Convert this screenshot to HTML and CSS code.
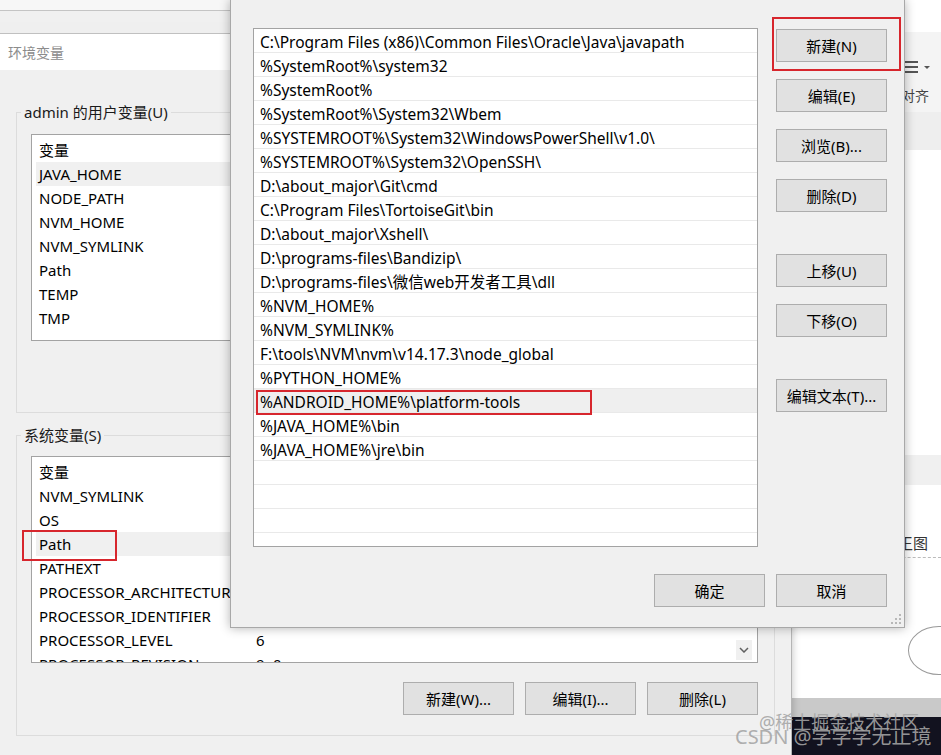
FILE: index.html
```html
<!DOCTYPE html>
<html lang="zh-CN">
<head>
    <meta charset="UTF-8">
    <meta name="viewport" content="width=device-width, initial-scale=1.0">
    <title>编辑环境变量</title>
    <link rel="stylesheet" href="styles.css">
</head>
<body>
<div class="desk">

    <!-- the editor window behind everything, only its right edge shows -->
    <div class="app-bg">
        <div class="app-top"></div>
        <div class="app-toolbar">
            <div class="tool">
                <svg class="tool-icon" width="30" height="16" viewBox="0 0 30 16">
                    <rect x="0" y="2" width="15" height="2" fill="#555"/>
                    <rect x="0" y="7" width="15" height="2" fill="#555"/>
                    <rect x="0" y="12" width="15" height="2" fill="#555"/>
                    <path d="M21 7 L27 7 L24 10 Z" fill="#555"/>
                </svg>
                <span class="tool-label">对齐</span>
            </div>
        </div>
        <div class="app-strip"></div>
        <div class="app-page"></div>
        <div class="app-strip app-strip-2"></div>
        <div class="app-page app-page-2">
            <span class="app-text">王图</span>
            <div class="dash-line"></div>
            <div class="round-btn"></div>
        </div>
        <div class="app-bar"></div>
        <div class="app-dark"></div>
    </div>

    <!-- 环境变量 -->
    <div class="win env-win">
        <div class="other-win"></div>
        <div class="win-title">环境变量</div>
        <div class="win-body">
            <div class="group">
                <div class="group-title">admin 的用户变量(U)</div>
                <div class="listbox">
                    <div class="lb-row lb-head"><span class="col-name">变量</span></div>
                    <div class="lb-row is-sel"><span class="col-name">JAVA_HOME</span></div>
                    <div class="lb-row"><span class="col-name">NODE_PATH</span></div>
                    <div class="lb-row"><span class="col-name">NVM_HOME</span></div>
                    <div class="lb-row"><span class="col-name">NVM_SYMLINK</span></div>
                    <div class="lb-row"><span class="col-name">Path</span></div>
                    <div class="lb-row"><span class="col-name">TEMP</span></div>
                    <div class="lb-row"><span class="col-name">TMP</span></div>
                </div>
            </div>

            <div class="group group-sys">
                <div class="group-title">系统变量(S)</div>
                <div class="listbox">
                    <div class="lb-row lb-head"><span class="col-name">变量</span></div>
                    <div class="lb-row"><span class="col-name">NVM_SYMLINK</span></div>
                    <div class="lb-row"><span class="col-name">OS</span></div>
                    <div class="lb-row is-sel"><span class="col-name">Path</span></div>
                    <div class="lb-row"><span class="col-name">PATHEXT</span></div>
                    <div class="lb-row"><span class="col-name">PROCESSOR_ARCHITECTURE</span></div>
                    <div class="lb-row"><span class="col-name">PROCESSOR_IDENTIFIER</span></div>
                    <div class="lb-row"><span class="col-name">PROCESSOR_LEVEL</span><span>6</span></div>
                    <div class="lb-row"><span class="col-name">PROCESSOR_REVISION</span><span>9e0a</span></div>
                    <span class="lb-arrow">
                        <svg width="10" height="6" viewBox="0 0 10 6"><path d="M1 1 L5 5 L9 1" fill="none" stroke="#606060" stroke-width="1.5"/></svg>
                    </span>
                </div>
                <div class="btn-row">
                    <button class="btn">新建(W)...</button>
                    <button class="btn">编辑(I)...</button>
                    <button class="btn">删除(L)</button>
                </div>
            </div>
        </div>
    </div>

    <!-- 编辑环境变量 -->
    <div class="win edit-win">
        <div class="edit-main">
            <div class="path-list">
                <div class="path-row">C:\Program Files (x86)\Common Files\Oracle\Java\javapath</div>
                <div class="path-row">%SystemRoot%\system32</div>
                <div class="path-row">%SystemRoot%</div>
                <div class="path-row">%SystemRoot%\System32\Wbem</div>
                <div class="path-row">%SYSTEMROOT%\System32\WindowsPowerShell\v1.0\</div>
                <div class="path-row">%SYSTEMROOT%\System32\OpenSSH\</div>
                <div class="path-row">D:\about_major\Git\cmd</div>
                <div class="path-row">C:\Program Files\TortoiseGit\bin</div>
                <div class="path-row">D:\about_major\Xshell\</div>
                <div class="path-row">D:\programs-files\Bandizip\</div>
                <div class="path-row">D:\programs-files\微信web开发者工具\dll</div>
                <div class="path-row">%NVM_HOME%</div>
                <div class="path-row">%NVM_SYMLINK%</div>
                <div class="path-row">F:\tools\NVM\nvm\v14.17.3\node_global</div>
                <div class="path-row">%PYTHON_HOME%</div>
                <div class="path-row is-sel">%ANDROID_HOME%\platform-tools</div>
                <div class="path-row">%JAVA_HOME%\bin</div>
                <div class="path-row">%JAVA_HOME%\jre\bin</div>
                <div class="path-row"></div>
                <div class="path-row"></div>
                <div class="path-row"></div>
                <div class="path-row"></div>
            </div>
            <div class="side-btns">
                <button class="btn">新建(N)</button>
                <button class="btn">编辑(E)</button>
                <button class="btn">浏览(B)...</button>
                <button class="btn">删除(D)</button>
                <button class="btn gap-lg">上移(U)</button>
                <button class="btn">下移(O)</button>
                <button class="btn gap-lg">编辑文本(T)...</button>
            </div>
        </div>
        <div class="edit-foot">
            <button class="btn">确定</button>
            <button class="btn">取消</button>
        </div>
        <svg class="grip" width="10" height="10" viewBox="0 0 10 10">
            <rect x="8" y="0" width="2" height="2" fill="#b8b8b8"/>
            <rect x="4" y="4" width="2" height="2" fill="#b8b8b8"/>
            <rect x="8" y="4" width="2" height="2" fill="#b8b8b8"/>
            <rect x="0" y="8" width="2" height="2" fill="#b8b8b8"/>
            <rect x="4" y="8" width="2" height="2" fill="#b8b8b8"/>
            <rect x="8" y="8" width="2" height="2" fill="#b8b8b8"/>
        </svg>
    </div>

    <!-- red marks drawn on the screenshot -->
    <div class="mark mark-path"></div>
    <div class="mark mark-android"></div>
    <div class="mark mark-new"></div>

    <div class="watermark">
        <div class="wm-1">@稀土掘金技术社区</div>
        <div class="wm-2">CSDN @学学学无止境</div>
    </div>
</div>
</body>
</html>
```

FILE: styles.css
```css
body {
    margin: 0;
    padding: 0;
    font-family: "Noto Sans", "Noto Sans CJK SC", sans-serif;
    color: #000;
}

.desk {
    position: relative;
    width: 941px;
    height: 755px;
    overflow: hidden;
    background: #fff;
}

/* background app */
.app-bg {
    position: absolute;
    top: 0;
    left: 0;
    width: 941px;
    height: 755px;
    display: flex;
    flex-direction: column;
}

.app-top {
    height: 32px;
    background: #fff;
}

.app-toolbar {
    height: 80px;
    background: #f4f4f4;
    display: flex;
    justify-content: flex-end;
}

.tool {
    width: 38px;
    display: flex;
    flex-direction: column;
    padding-top: 27px;
    font-size: 14px;
    color: #444;
}

.tool-label {
    margin-top: 12px;
    margin-left: -2px;
    line-height: 18px;
}

.app-strip {
    height: 38px;
    background: #eeeeee;
}

.app-page {
    height: 305px;
    background: #fff;
}

.app-strip-2 {
    height: 30px;
    background: #f0f0f0;
}

.app-page-2 {
    height: 213px;
    display: flex;
    flex-direction: column;
    align-items: flex-end;
    padding-top: 48px;
    box-sizing: border-box;
}

.app-text {
    width: 43px;
    font-size: 15px;
    color: #333;
    line-height: 20px;
    white-space: nowrap;
}

.dash-line {
    width: 150px;
    margin-top: 4px;
    border-top: 1px dashed #bbb;
}

.round-btn {
    width: 60px;
    height: 47px;
    margin-top: 68px;
    margin-right: -29px;
    border: 1px solid #999;
    border-radius: 50%;
}

.app-bar {
    height: 19px;
    background: #c9c9c9;
}

.app-dark {
    flex: 1;
    background: #12121f;
}

/* windows */
.win {
    position: absolute;
    box-sizing: border-box;
    background: #f0f0f0;
}

.env-win {
    left: 0;
    top: 0;
    width: 792px;
    height: 755px;
    border-right: 1px solid #b5b5b5;
    box-shadow: 0 0 8px rgba(0, 0, 0, 0.25);
}

.other-win {
    height: 10px;
    background: #f7f7f7;
    border-bottom: 1px solid #c4c4c4;
    box-shadow: 0 22px 0 0 #efefef;
    margin-bottom: 22px;
}

.win-title {
    height: 37px;
    line-height: 37px;
    background: #fff;
    border-top: 1px solid #c0c0c0;
    box-sizing: border-box;
    padding-left: 8px;
    font-size: 14px;
    color: #8c8c8c;
}

.win-body {
    padding-top: 42px;
}

.group {
    margin: 0 16px;
    border: 1px solid #dcdcdc;
    padding: 0 16px 71px 14px;
}

.group-sys {
    margin-top: 22px;
    padding-bottom: 20px;
}

.group-title {
    width: fit-content;
    margin: -11px 0 0 -10px;
    padding: 0 3px;
    background: #f0f0f0;
    font-size: 15px;
    line-height: 20px;
    color: #1a1a1a;
}

.listbox {
    position: relative;
    margin-top: 12px;
    height: 207px;
    box-sizing: border-box;
    border: 1px solid #a3a3a3;
    background: #fff;
    padding: 3px 0 0 4px;
    overflow: hidden;
}

.group-sys .listbox {
    margin-top: 11px;
}

.lb-row {
    display: flex;
    height: 24px;
    line-height: 24px;
    padding-left: 3px;
    font-size: 15px;
    white-space: nowrap;
}

.col-name {
    width: 217px;
    flex-shrink: 0;
}

.lb-row.is-sel {
    background: #f0f0f0;
}

.lb-arrow {
    position: absolute;
    right: 5px;
    bottom: 2px;
    width: 16px;
    height: 20px;
    background: #f0f0f0;
    display: flex;
    align-items: center;
    justify-content: center;
}

.btn-row {
    display: flex;
    justify-content: flex-end;
    gap: 11px;
    margin-top: 19px;
}

.btn {
    width: 111px;
    height: 33px;
    box-sizing: border-box;
    background: #e1e1e1;
    border: 1px solid #adadad;
    padding: 0;
    font-family: "Noto Sans", "Noto Sans CJK SC", sans-serif;
    font-size: 15px;
    color: #000;
}

/* edit dialog */
.edit-win {
    left: 230px;
    top: 0;
    width: 675px;
    height: 628px;
    border: 1px solid #a8a8a8;
    border-top: none;
    padding: 28px 17px 0 22px;
    box-shadow: 0 0 10px rgba(0, 0, 0, 0.3);
}

.edit-main {
    display: flex;
    gap: 18px;
}

.path-list {
    width: 505px;
    height: 519px;
    box-sizing: border-box;
    border: 1px solid #a3a3a3;
    background: #fff;
    overflow: hidden;
}

.path-row {
    height: 24px;
    line-height: 23px;
    box-sizing: border-box;
    border-bottom: 1px solid #e9e9e9;
    padding: 2px 0 0 6px;
    font-size: 15.5px;
    white-space: nowrap;
}

.path-row.is-sel {
    background: #efefef;
}

.side-btns {
    width: 111px;
    padding-top: 1px;
    display: flex;
    flex-direction: column;
    gap: 17px;
}

.side-btns .gap-lg {
    margin-top: 25px;
}

.edit-foot {
    display: flex;
    justify-content: flex-end;
    gap: 11px;
    padding-top: 27px;
}

.grip {
    position: absolute;
    right: 3px;
    bottom: 3px;
}

/* annotations */
.mark {
    position: absolute;
    box-sizing: border-box;
    border: 2px solid #d7262d;
}

.mark-path {
    left: 22px;
    top: 530px;
    width: 95px;
    height: 31px;
}

.mark-android {
    left: 256px;
    top: 390px;
    width: 336px;
    height: 25px;
}

.mark-new {
    left: 772px;
    top: 17px;
    width: 129px;
    height: 54px;
}

.watermark {
    position: absolute;
    left: 735px;
    top: 712px;
    color: rgba(165, 165, 165, 0.9);
    line-height: 20px;
    white-space: nowrap;
}

.wm-1 {
    margin-left: 24px;
    font-size: 18px;
}

.wm-2 {
    font-size: 20px;
    margin-top: -5px;
}
```
